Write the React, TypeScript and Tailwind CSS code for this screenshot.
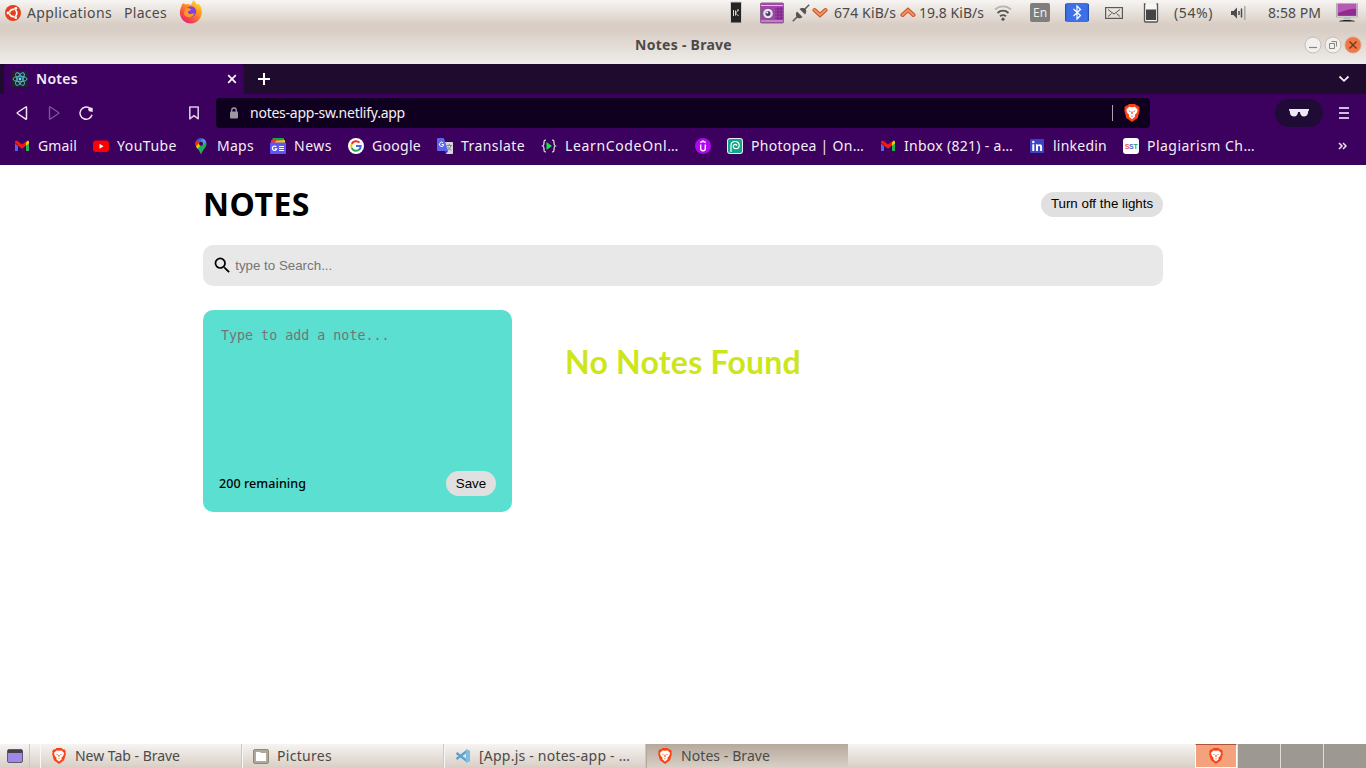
import { useLayoutEffect, useRef, useState } from "react";
import type { ReactNode } from "react";

/* One-line label whose tracking is adjusted so that it fills a given width. */
function Label({ text, w, className = "" }: { text: string; w: number; className?: string }) {
  const ref = useRef<HTMLSpanElement>(null);
  const [spacing, setSpacing] = useState(0);
  useLayoutEffect(() => {
    if (ref.current) {
      const natural = ref.current.getBoundingClientRect().width;
      setSpacing((w - natural) / text.length);
    }
  }, [text, w]);
  return (
    <span className={`block shrink-0 whitespace-pre ${className}`} style={{ width: w }}>
      <span ref={ref} style={{ letterSpacing: spacing }}>
        {text}
      </span>
    </span>
  );
}

function Brave({ className = "" }: { className?: string }) {
  return (
    <svg viewBox="0 0 16 18" className={`shrink-0 ${className}`}>
      <path d="M5 0h6l1.500 1.600L14 1.400 15.700 4l-.5 1.300.5 1.400-2 7.200L8 18l-5.700-4.100-2-7.200.5-1.400L.3 4 2 1.400l1.500.2z" fill="#fb4212" />
      <path d="M5.200 2.700 8 3.200l2.800-.5 2.900 3-1 3.300-2 2 .4 1.600L8 15.200l-3.100-2.600.4-1.600-2-2-1-3.300z" fill="#fff" />
      <path d="M4.200 6.500l2.400.4-.5 1zM11.800 6.500l-2.400.4.5 1zM7.500 7.500 7.200 9.500l.8.600.8-.6-.3-2zM6.300 11.200 8 12l1.700-.8L8 13z" fill="#d8482a" />
    </svg>
  );
}

function GmailIcon() {
  return (
    <svg viewBox="0 0 16 16" className="size-4 shrink-0">
      <path d="M1 4v9h3V6z" fill="#4b68f5" />
      <path d="M15 4v9h-3V6z" fill="#22b455" />
      <path d="M1 5V4c0-1.400 1.500-1.700 2.500-1L8 6.600 12 3.500v4.100L8 10.800 1 5.400z" fill="#ee1c16" />
      <path d="M12 4.500 13 3c1-.6 2 0 2 1.100V5.500l-3 2.300z" fill="#fcc60b" />
      <path d="M1 4.200 4 6.200v2L1 5.800z" fill="#bb1212" />
    </svg>
  );
}

const YouTubeIcon = (
  <svg viewBox="0 0 16 16" className="size-4 shrink-0">
    <rect y="2.500" width="16" height="11.500" rx="3" fill="#f00" />
    <path d="m6.500 5.800 4 2.400-4 2.500z" fill="#fff" />
  </svg>
);

const MapsIcon = (
  <svg viewBox="0 0 16 16" className="size-4 shrink-0">
    <path d="M8 .3a5.600 5.600 0 0 0-5.500 5.500c0 2 .8 3.100 2.200 4.900C6.500 13 7 14 7.300 15.200c.3 1 1.100 1 1.400 0C9 14 9.500 13 11.300 10.700c1.400-1.800 2.200-2.900 2.200-4.900A5.600 5.600 0 0 0 8 .3z" fill="#24ad55" />
    <path d="M3 8.500c.5 1 1 1.500 1.700 2.300l5-6.100L5.400 6z" fill="#fbc40a" />
    <path d="M3.500 2.500A5 5 0 0 0 2.900 8l4-4.600z" fill="#ee2a20" />
    <path d="M3.500 2.500a5.600 5.600 0 0 1 6-2l-3 3.600z" fill="#4352f0" />
    <path d="M9.500.5a5.500 5.500 0 0 1 3.500 3L9.500 7.600z" fill="#6a86ff" />
    <circle cx="8" cy="5.700" r="2" fill="#3c005e" />
  </svg>
);

const NewsIcon = (
  <svg viewBox="0 0 16 16" className="size-4 shrink-0">
    <path d="M2.500 0h11.500v5H2.500z" fill="#16a64a" />
    <path d="M1 2.200 9 1.200l2 3.800H1z" fill="#ef3824" />
    <path d="M6 2.700 15 2v3H5z" fill="#fbc60d" />
    <rect y="4.500" width="16" height="11.500" rx="1" fill="#5c55fa" />
    <path d="M6.300 8.900a2.200 2.200 0 1 0 .4 1.900H4.700" fill="none" stroke="#fff" strokeWidth="1.300" />
    <path d="M9 8.500h5M9 10.500h5M9 12.500h5" stroke="#fff" strokeWidth="1" />
  </svg>
);

const GoogleIcon = (
  <svg viewBox="0 0 16 16" className="size-4 shrink-0">
    <circle cx="8" cy="8" r="8" fill="#fff" />
    <path d="M11.500 4.600A4.800 4.800 0 0 0 3.700 6" fill="none" stroke="#ed3527" strokeWidth="2" />
    <path d="M3.700 5.900a4.800 4.800 0 0 0 0 4.200" fill="none" stroke="#fbbd05" strokeWidth="2" />
    <path d="M3.700 10.100a4.800 4.800 0 0 0 7.400 1.500" fill="none" stroke="#22aa4b" strokeWidth="2" />
    <path d="M8 8h4.700c0 1.500-.6 2.800-1.700 3.700" fill="none" stroke="#4168f0" strokeWidth="2" />
  </svg>
);

const TranslateIcon = (
  <svg viewBox="0 0 16 16" className="size-4 shrink-0">
    <path d="M6 4h9.300a.7.700 0 0 1 .7.700v10.600a.7.700 0 0 1-.7.700H9z" fill="#d5d5dc" />
    <path d="M9.500 7.500h5.500M12.300 6v1.500M14 7.500c-.7 2.500-2 4-3.500 5M10.800 9c.8 1.500 2 2.500 3.500 3.300" fill="none" stroke="#80848e" />
    <path d="m8 13 3 0-2 3z" fill="#3338ad" />
    <path d="M.8 0h6l4.400 13H.8a.8.800 0 0 1-.8-.8V.8C0 .3.3 0 .8 0z" fill="#5b63ed" />
    <path d="M6.100 4.900a2.100 2.100 0 1 0 .6 1.700H4.700" fill="none" stroke="#fff" />
  </svg>
);

const LearnCodeIcon = (
  <svg viewBox="0 0 16 16" className="size-4 shrink-0">
    <path d="M5 2.200C3 2 3 3 3 5s0 2.500-1.300 3C3 8.500 3 9 3 11s0 3 2 2.800M11 2.200c2-.2 2 .8 2 2.800s0 2.500 1.300 3C13 8.500 13 9 13 11s0 3-2 2.800" fill="none" stroke="#dcd6e2" strokeWidth="1.300" />
    <path d="m5.500 4 5.500 4-5.500 4z" fill="#12e844" />
  </svg>
);

const UdemyIcon = (
  <svg viewBox="0 0 16 16" className="size-4 shrink-0">
    <circle cx="8" cy="8" r="8" fill="#b206ef" />
    <path d="M5.700 6.500v4a2.300 2.300 0 0 0 4.600 0v-4M5.300 4.700 8 3.100 10.700 4.700" fill="none" stroke="#fff" strokeWidth="1.400" />
  </svg>
);

const PhotopeaIcon = (
  <svg viewBox="0 0 16 16" className="size-4 shrink-0">
    <rect width="16" height="16" rx="3" fill="#e8eeec" />
    <rect x="1" y="1" width="14" height="14" rx="2" fill="#12a58b" />
    <path d="M4 14V7.500C4 5 5.500 3.500 8 3.500s4.200 1.600 4.200 3.700-1.500 3.500-3.400 3.500C7.300 10.700 6.300 9.700 6.300 8.400S7.200 6.300 8.200 6.300s1.600.7 1.500 1.500" fill="none" stroke="#fff" strokeWidth="1.200" />
  </svg>
);

const LinkedinIcon = (
  <svg viewBox="0 0 16 16" className="size-4 shrink-0">
    <rect x="1" y="1" width="14" height="14" rx="1" fill="#3c43c6" />
    <path d="M3.300 6.300h2V13h-2zM7 6.300h1.900v1c.9-1.700 4.200-1.600 4.200 1.500V13h-2V9.500c0-2-2.100-1.900-2.100 0V13H7z" fill="#fff" />
    <circle cx="4.300" cy="4" r="1.200" fill="#fff" />
  </svg>
);

const SstIcon = (
  <span className="flex size-4 shrink-0 items-center justify-center rounded-[3px] bg-white font-['Liberation_Sans'] text-[7px] font-bold leading-none tracking-[-0.3px]">
    <span className="text-[#e8584f]">S</span>
    <span className="text-[#4a6fd0]">S</span>
    <span className="text-[#2d9f69]">T</span>
  </span>
);

const bookmarks: { icon: ReactNode; text?: string; w?: number }[] = [
  { icon: <GmailIcon />, text: "Gmail", w: 39 },
  { icon: YouTubeIcon, text: "YouTube", w: 60 },
  { icon: MapsIcon, text: "Maps", w: 37 },
  { icon: NewsIcon, text: "News", w: 38 },
  { icon: GoogleIcon, text: "Google", w: 49 },
  { icon: TranslateIcon, text: "Translate", w: 64 },
  { icon: LearnCodeIcon, text: "LearnCodeOnl…", w: 114 },
  { icon: UdemyIcon },
  { icon: PhotopeaIcon, text: "Photopea | On…", w: 113 },
  { icon: <GmailIcon />, text: "Inbox (821) - a…", w: 109 },
  { icon: LinkedinIcon, text: "linkedin", w: 54 },
  { icon: SstIcon, text: "Plagiarism Ch…", w: 108 },
];

function DesktopPanel() {
  return (
    <div className="flex h-[25px] items-center text-[14px] leading-[25px] text-[#4c4a48]">
      <svg viewBox="0 0 16 16" className="ml-[5px] size-4 shrink-0">
        <circle cx="8" cy="8" r="8" fill="#e2401e" />
        <circle cx="8.200" cy="8" r="3.600" fill="none" stroke="#fff" strokeWidth="1.700" />
        <path d="M8.200 8H1.500M8.200 8l3.200-5.800M8.200 8l3.200 5.800" stroke="#e2401e" strokeWidth="1" />
        <circle cx="3" cy="8" r="1.400" fill="#fff" />
        <circle cx="10.800" cy="3.300" r="1.400" fill="#fff" />
        <circle cx="10.800" cy="12.700" r="1.400" fill="#fff" />
      </svg>
      <Label text="Applications" w={85} className="ml-1.5" />
      <Label text="Places" w={43} className="ml-3" />
      <svg viewBox="0 0 24 24" className="-mt-[2px] ml-3 size-6 shrink-0">
        <defs>
          <linearGradient id="fox" x1="1" y1="0" x2=".3" y2="1">
            <stop offset=".1" stopColor="#ffe12d" />
            <stop offset=".5" stopColor="#ff8b20" />
            <stop offset="1" stopColor="#ed1e72" />
          </linearGradient>
        </defs>
        <path d="M3 4.500 5 3l1 1.500L9.500 4 12 5l2.500-5 3.500 4.500 2-.5 2 3c3 8-2 16.500-10 16.500C5 23.500 0 17 1 10.500z" fill="url(#fox)" />
        <circle cx="12" cy="11.500" r="5.200" fill="#8642d8" />
        <path d="M6 9c2-2 5-.8 6.500.5L10 11c-2 .5-1 2.500.5 3 2 .5 3-1 5-.5-2 5-9 4.700-10.500.5z" fill="#ff9b22" />
      </svg>

      <svg viewBox="0 0 12 23" className="ml-[527px] h-[23px] w-3 shrink-0">
        <rect x=".5" y="1" width="11" height="21" rx="1" fill="#242424" stroke="#d2cfca" />
        <path d="M3.500 9v6M8.500 9 5.500 12l3 3M7 9h2M5.500 9.500v5" stroke="#d8d8d8" fill="none" />
      </svg>
      <svg viewBox="0 0 24 22" className="ml-[18px] h-[22px] w-[24px] shrink-0">
        <rect x=".5" y="1" width="23" height="20" rx="1" fill="#a443ae" stroke="#846888" />
        <path d="M1 3.500h22M1 19h22" stroke="#ddc0e0" />
        <path d="M15 7h8M15 10h8M15 13h8M15 16h8M18 5v13M21 5v13" stroke="#6c2275" strokeWidth=".8" />
        <circle cx="8" cy="11.500" r="5.300" fill="#e7e0ed" stroke="#744e80" />
        <circle cx="8" cy="11.500" r="2.500" fill="#514073" />
        <circle cx="7.200" cy="10.600" r="1" fill="#fff" />
      </svg>
      <svg viewBox="0 0 18 18" className="ml-2 size-[18px] shrink-0">
        <path d="M.8 17.200 5.500 12.500M12.500 5.500l4.700-4.700" stroke="#5a5956" strokeWidth="1.500" />
        <path d="m5 7.500 5.500 5.500c-1.500 1.600-4 1.700-5.400.4S3.400 9 5 7.500zM7.500 5l5.500 5.500c1.600-1.500 1.700-4 .4-5.400S9 3.400 7.500 5z" fill="#555451" />
      </svg>
      <svg viewBox="0 0 16 12" className="-mt-0.5 ml-[2px] h-3 w-4 shrink-0">
        <path d="m2.500 4 5.500 5 5.500-5" fill="none" stroke="#c85327" strokeWidth="4" strokeLinecap="round" />
        <path d="m2.500 4 5.500 5 5.500-5" fill="none" stroke="#f39465" strokeWidth="2" strokeLinecap="round" />
      </svg>
      <Label text="674 KiB/s" w={62} className="ml-[6px]" />
      <svg viewBox="0 0 16 12" className="ml-[4px] h-3 w-4 shrink-0">
        <path d="m2.500 8 5.500-5 5.500 5" fill="none" stroke="#c85327" strokeWidth="4" strokeLinecap="round" />
        <path d="m2.500 8 5.500-5 5.500 5" fill="none" stroke="#f39465" strokeWidth="2" strokeLinecap="round" />
      </svg>
      <Label text="19.8 KiB/s" w={65} className="ml-[3px]" />
      <svg viewBox="0 0 18 16" className="ml-2.5 h-4 w-[18px] shrink-0">
        <path d="M1 4.500c4.500-4.200 11.500-4.200 16 0" fill="none" stroke="#b9b5b0" strokeWidth="1.800" />
        <path d="M3.500 8c3.300-3 7.700-3 11 0M6 11.300c1.900-1.500 4.100-1.500 6 0" fill="none" stroke="#555" strokeWidth="1.800" />
        <circle cx="9" cy="14.200" r="1.600" fill="#555" />
      </svg>
      <span className="ml-[18px] flex h-[19px] w-5 shrink-0 items-center justify-center rounded-[2px] bg-[#7f7e7c] text-[12px] text-[#eee]">En</span>
      <svg viewBox="0 0 24 19" className="ml-[15px] h-[19px] w-6 shrink-0">
        <rect width="24" height="19" rx="2.500" fill="#3d6fe6" />
        <path d="M.7 1v17M23.300 1v17" stroke="#244da8" />
        <path d="m8.500 6 7 6.500-3.500 3.500V3l3.500 3.500-7 6.500" fill="none" stroke="#fff" strokeWidth="1.200" />
      </svg>
      <svg viewBox="0 0 18 12" className="ml-4 h-3 w-[18px] shrink-0">
        <rect x=".6" y=".6" width="16.800" height="10.800" fill="none" stroke="#5a5956" strokeWidth="1.200" />
        <path d="m3 2.500 6 4.500 6-4.500M3 9.500l3.500-3M15 9.500l-3.500-3" fill="none" stroke="#5a5956" />
      </svg>
      <svg viewBox="0 0 16 20" className="ml-5 h-5 w-4 shrink-0">
        <path d="M2.500 1h-1v17a1 1 0 0 0 1 1h11a1 1 0 0 0 1-1V1h-1" fill="#f7f6f4" stroke="#555451" strokeWidth="1.300" />
        <path d="M3 6.500h10v10.500H3z" fill="#454545" />
      </svg>
      <Label text="(54%)" w={39} className="ml-[15px]" />
      <svg viewBox="0 0 16 16" className="ml-[17px] size-4 shrink-0">
        <path d="M1 6h2.500L7 2.500v11L3.500 10H1z" fill="#4c4c4c" />
        <path d="M9 6v4M11.500 3.500v9" stroke="#4c4c4c" strokeWidth="1.500" />
        <path d="M14.800 1v14" stroke="#aba7a1" strokeWidth="1.500" />
      </svg>
      <Label text="8:58 PM" w={53} className="ml-[22px]" />
      <svg viewBox="0 0 22 19" className="ml-[15px] h-[19px] w-[22px] shrink-0">
        <rect x="1" y="0" width="20" height="13.500" fill="#8e2b8c" stroke="#eee" strokeWidth="1.200" />
        <path d="M2 1h18v5c-6-1-11 2-18 4z" fill="#b758b5" />
        <path d="M.4 0v14h21.200V0" fill="none" stroke="#999" strokeWidth=".8" />
        <path d="M8 14.500h6l1 2H7z" fill="#bbb" />
        <path d="M3 18.500c1-2 15-2 16 0z" fill="#222" />
      </svg>
    </div>
  );
}

function TitleBar() {
  return (
    <div className="flex h-[39px] items-center text-[#4c4a48]">
      <Label text="Notes - Brave" w={97} className="ml-[635px] text-[14px] font-bold" />
      <div className="ml-auto mr-1 flex gap-[2px]">
        <svg viewBox="0 0 18 18" className="size-[18px]">
          <circle cx="9" cy="9" r="8" fill="#f2f0ee" stroke="#c6beb6" />
          <path d="M5 11.500h8" stroke="#8b857e" strokeWidth="1.200" />
        </svg>
        <svg viewBox="0 0 18 18" className="size-[18px]">
          <circle cx="9" cy="9" r="8" fill="#f2f0ee" stroke="#c6beb6" />
          <path d="M5.500 7.500h5v5h-5zM7.500 5.500h5v5" fill="none" stroke="#8b857e" />
        </svg>
        <svg viewBox="0 0 18 18" className="size-[18px]">
          <circle cx="9" cy="9" r="8" fill="#f07746" stroke="#dfa084" />
          <path d="m5.500 5.500 7 7M12.500 5.500l-7 7" stroke="#7c3a22" strokeWidth="1.500" />
        </svg>
      </div>
    </div>
  );
}

function BrowserChrome() {
  return (
    <div className="bg-[#3c005e] text-[#f3eef6]">
      <div className="flex h-[30px] bg-[#1e0b2e]">
        <div className="ml-1 flex w-60 items-center rounded-t-[4px] bg-[#3c005e]">
          <svg viewBox="0 0 16 16" className="ml-2 size-4 shrink-0">
            <rect width="16" height="16" rx="1" fill="#212327" />
            <g fill="none" stroke="#58bfd8" strokeWidth=".9">
              <ellipse cx="8" cy="8" rx="7" ry="2.700" />
              <ellipse cx="8" cy="8" rx="7" ry="2.700" transform="rotate(60 8 8)" />
              <ellipse cx="8" cy="8" rx="7" ry="2.700" transform="rotate(120 8 8)" />
            </g>
            <circle cx="8" cy="8" r="1.400" fill="#67dbf5" />
          </svg>
          <Label text="Notes" w={42} className="ml-2 pb-0.5 text-[14px] font-semibold" />
          <svg viewBox="0 0 10 10" className="ml-auto mr-[7px] size-2.5">
            <path d="m1.200 1.200 7.600 7.600M8.800 1.200 1.200 8.800" stroke="#fff" strokeWidth="1.700" />
          </svg>
        </div>
        <svg viewBox="0 0 12 12" className="ml-3.5 mt-[9px] size-3">
          <path d="M6 0v12M0 6h12" stroke="#fff" strokeWidth="2" />
        </svg>
        <svg viewBox="0 0 12 8" className="ml-auto mr-4 mt-[11px] h-2 w-3">
          <path d="m1.500 1.500 4.500 4.300 4.500-4.300" fill="none" stroke="#f3eef6" strokeWidth="1.800" />
        </svg>
      </div>

      <div className="flex h-[37px] items-center">
        <svg viewBox="0 0 12 14" className="ml-4 h-3.5 w-3">
          <path d="M10.500 1.300v11.400c0 .5-.4.500-.8.300L1.500 7.500c-.4-.3-.4-.7 0-1L9.700 1c.4-.3.8-.2.800.300z" fill="none" stroke="#eee6f3" strokeWidth="1.500" />
        </svg>
        <svg viewBox="0 0 12 14" className="ml-5 h-3.5 w-3">
          <path d="M1.500 1.300v11.400c0 .5.4.500.8.300l8.200-5.500c.4-.3.4-.7 0-1L2.300 1c-.4-.3-.8-.2-.8.300z" fill="none" stroke="#7d5597" strokeWidth="1.400" />
        </svg>
        <svg viewBox="0 0 16 16" className="ml-[18px] size-4">
          <path d="M11.500 3A6.100 6.100 0 1 0 14 9.800" fill="none" stroke="#eee6f3" strokeWidth="1.500" />
          <path d="M10 4.300 11.800 2.300 14.700 3v4l-3.700-.8z" fill="#eee6f3" />
        </svg>
        <svg viewBox="0 0 12 14" className="ml-[94px] h-3.5 w-3">
          <path d="M1.800 1h8.400v11.800L6 9.600l-4.200 3.200z" fill="none" stroke="#d7c8df" strokeWidth="1.600" strokeLinejoin="round" />
        </svg>
        <div className="ml-4 flex h-[30px] w-[934px] items-center rounded-[4px] bg-[#10001f]">
          <svg viewBox="0 0 8 12" className="ml-3.5 h-3 w-2">
            <path d="M1.700 5V3.300a2.300 2.300 0 0 1 4.600 0V5" fill="none" stroke="#9d96a5" strokeWidth="1.300" />
            <rect y="4.500" width="8" height="7" rx="1" fill="#9d96a5" />
          </svg>
          <Label text="notes-app-sw.netlify.app" w={155} className="ml-3 text-[14px]" />
          <div className="ml-auto h-4 w-px bg-[#aaa3b0]" />
          <Brave className="ml-[11px] mr-2.5 h-[18px] w-4" />
        </div>
        <div className="ml-auto flex h-7 w-12 items-center justify-center rounded-full bg-[#200b36]">
          <svg viewBox="0 0 20 8" className="h-2 w-5">
            <path d="M0 0h20v1.800h-.8c0 3.500-1.100 5.700-4.100 5.700-2.800 0-3.800-2-4.200-4.500H9.100C8.700 5.500 7.700 7.500 4.900 7.500c-3 0-4.100-2.200-4.100-5.700H0z" fill="#eee9f1" />
          </svg>
        </div>
        <svg viewBox="0 0 10 12" className="ml-4 mr-[17px] h-3 w-2.5">
          <path d="M0 1h10M0 6h10M0 11h10" stroke="#cfbdd9" strokeWidth="2" />
        </svg>
      </div>

      <div className="flex h-[34px] items-center gap-4 px-3.5 pb-1 text-[14px] leading-[30px]">
        {bookmarks.map(({ icon, text, w }, i) => (
          <div key={i} className="flex items-center gap-2">
            {icon}
            {text && w && <Label text={text} w={w} />}
          </div>
        ))}
        <svg viewBox="0 0 9 8" className="ml-auto mr-[5px] h-2 w-[9px]">
          <path d="m1 1 3 3-3 3M5 1l3 3-3 3" fill="none" stroke="#eee6f3" strokeWidth="1.500" />
        </svg>
      </div>
    </div>
  );
}

function NotesPage() {
  return (
    <main className="grow bg-white">
      <div className="mx-auto w-[960px]">
        <header className="flex h-20 items-center justify-between pb-0.5">
          <Label text="NOTES" w={107} className="text-[32px] font-bold text-black" />
          <button className="h-[25px] w-[122px] whitespace-nowrap rounded-full bg-[#e0e0e0] font-['Liberation_Sans',sans-serif] text-[13.333px] text-black">
            Turn off the lights
          </button>
        </header>
        <div className="flex h-[41px] items-center rounded-[10px] bg-[#e8e8e8] pl-[9.400px]">
          <svg viewBox="0 0 24 24" className="size-[20.800px]">
            <path
              d="M15.500 14h-.79l-.28-.27A6.471 6.471 0 0 0 16 9.500 6.500 6.500 0 1 0 9.500 16c1.610 0 3.090-.59 4.230-1.570l.27.28v.79l5 4.990L20.490 19l-4.990-5zm-6 0C7.010 14 5 11.990 5 9.500S7.010 5 9.500 5 14 7.010 14 9.500 11.990 14 9.500 14z"
              fill="#000"
            />
          </svg>
          <input
            placeholder="type to Search..."
            className="ml-[2px] w-80 bg-transparent font-['Liberation_Sans',sans-serif] text-[13.333px] outline-none placeholder:text-[#757575]"
          />
        </div>
        <div className="mt-6 flex">
          <section className="flex h-[202px] w-[309px] flex-col justify-between rounded-[10px] bg-[#5adfd0] p-4">
            <textarea
              placeholder="Type to add a note..."
              className="h-[140px] resize-none bg-transparent px-[2px] py-0 font-['DejaVu_Sans_Mono',monospace] text-[13.333px] leading-normal outline-none placeholder:text-[#757575]"
            />
            <div className="flex items-center justify-between">
              <Label text="200 remaining" w={87} className="pt-0.5 text-[12.500px] font-medium text-black" />
              <button className="h-[25px] w-[50px] rounded-full bg-[#e0e0e0] font-['Liberation_Sans',sans-serif] text-[13.333px] text-black">
                Save
              </button>
            </div>
          </section>
          <Label
            text="No Notes Found"
            w={236}
            className="ml-[53px] mt-[28px] font-['Lato'] text-[32px] font-bold leading-[48px] text-[#cde61c]"
          />
        </div>
      </div>
    </main>
  );
}

function Task({ icon, text, w, active = false }: { icon: ReactNode; text: string; w: number; active?: boolean }) {
  return (
    <div
      className={`flex h-full w-[202px] shrink-0 items-center border-l pl-2.5 ${
        active ? "border-[#b5a89b] bg-linear-to-b from-[#b6a99c] to-[#d9d0c7]" : "border-[#faf8f6] shadow-[inset_-1px_0_#cfc7bf]"
      }`}
    >
      {icon}
      <Label text={text} w={w} className="ml-2" />
    </div>
  );
}

function Taskbar() {
  return (
    <div className="flex h-6 items-center bg-linear-to-b from-[#f6f4f2] to-[#d9cec5] text-[14px] leading-6 text-[#4c4a48]">
      <div className="flex h-full w-[30px] items-center border-r border-[#cfc7bf] pl-[7px]">
        <svg viewBox="0 0 16 14" className="h-3.5 w-4">
          <rect x=".5" y=".5" width="15" height="13" rx="1.500" fill="#a088e4" stroke="#5d5876" />
          <path d="M1 1h14v3H1z" fill="#42404b" />
        </svg>
      </div>
      <div className="w-2.5" />
      <Task icon={<Brave className="h-4 w-4" />} text="New Tab - Brave" w={105} />
      <Task
        icon={
          <svg viewBox="0 0 16 15" className="h-[15px] w-4 shrink-0">
            <rect x=".5" y=".5" width="15" height="14" rx="1.500" fill="#b1a997" stroke="#8f8877" />
            <path d="M3 3h4l1 1h5v8H3z" fill="#fff" />
          </svg>
        }
        text="Pictures"
        w={55}
      />
      <Task
        icon={
          <svg viewBox="0 0 16 16" className="size-4 shrink-0">
            <path d="M1.500 5 12 13M1.500 11 12 3" stroke="#5ba3d0" strokeWidth="2.400" />
            <path d="m11 1 4 1.700v10.600L11 15z" fill="#7bbde3" />
          </svg>
        }
        text="[App.js - notes-app - …"
        w={151}
      />
      <Task icon={<Brave className="h-4 w-4" />} text="Notes - Brave" w={89} active />
      <div className="ml-auto flex h-full gap-px bg-[#e4ddd6]">
        <div className="flex w-[42px] items-center justify-center border border-t-[#a9573a] border-white bg-[#f4a27e]">
          <Brave className="h-4 w-4" />
        </div>
        <div className="w-[42px] bg-[#9d9891]" />
        <div className="w-[42px] bg-[#9d9891]" />
        <div className="w-[42px] bg-[#9d9891]" />
      </div>
    </div>
  );
}

export default function App() {
  return (
    <div className="flex h-[768px] w-[1366px] flex-col overflow-hidden font-['Noto_Sans',sans-serif]">
      <div className="shrink-0 bg-[linear-gradient(#f7f5f3_0px,#d8cdc4_25px,#d8cdc4_30px,#efedea_64px)]">
        <DesktopPanel />
        <TitleBar />
      </div>
      <BrowserChrome />
      <NotesPage />
      <Taskbar />
    </div>
  );
}
